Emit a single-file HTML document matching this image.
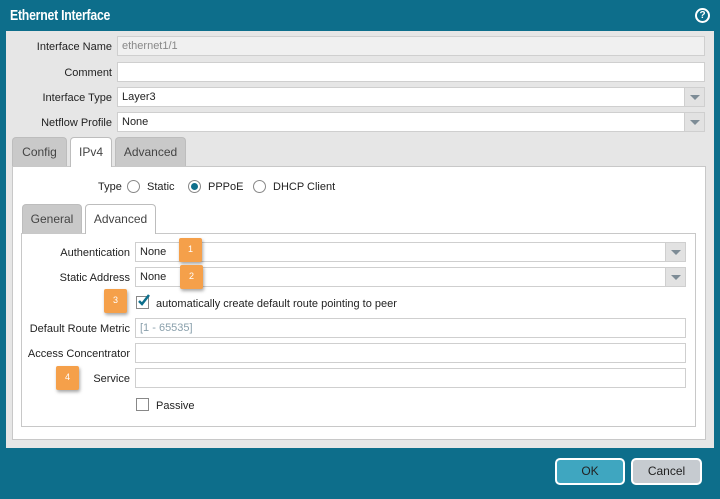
<!DOCTYPE html>
<html><head><style>
*{box-sizing:border-box;margin:0;padding:0}
body{width:720px;height:499px;background:#0d6e8b;font-family:"Liberation Sans",sans-serif;font-size:11px;color:#222;position:relative;overflow:hidden}
.a{position:absolute}
.title{left:10px;top:7px;color:#fff;font-size:15px;font-weight:bold;transform:scaleX(0.82);transform-origin:0 0;letter-spacing:-0.3px}
.help{left:695px;top:8px;width:15px;height:15px;border:2px solid #fff;border-radius:50%;color:#fff;font-size:10px;font-weight:bold;text-align:center;line-height:11px}
.panel{left:6px;top:31px;width:708px;height:417px;background:#e6e6e6}
.lbl{text-align:right;font-size:11px}
.inp{background:#fff;border:1px solid #cfcfcf;height:20px;padding-left:4px;line-height:19px;font-size:11px}
.arr{position:absolute;right:0;top:0;width:20px;height:18px;background:#e2e2e2;border-left:1px solid #cfcfcf}
.arr:after{content:"";position:absolute;left:5px;top:7px;border-left:5px solid transparent;border-right:5px solid transparent;border-top:5px solid #7d8c96}
.tab{background:#c9c9c9;border:1px solid #bdbdbd;border-bottom:none;border-radius:4px 4px 0 0;text-align:center;font-size:12px;color:#444;line-height:29px}
.tab.on{background:#fff}
.box{background:#fff;border:1px solid #c8c8c8}
.badge{width:23px;height:24px;background:#f5a04a;color:#fff;font-size:9px;text-align:center;line-height:22px;box-shadow:1px 2px 3px rgba(0,0,0,.35);border-radius:2px}
.radio{width:13px;height:13px;border:1px solid #888;border-radius:50%;background:#fff}
.btn{border:2px solid #fff;border-radius:5px;text-align:center;line-height:22px;font-size:12px;color:#222}
</style></head><body>
<div class="a title">Ethernet Interface</div>
<div class="a help">?</div>
<div class="a panel"></div>

<div class="a lbl" style="left:10px;top:41px;width:102px">Interface Name</div>
<div class="a inp" style="left:117px;top:36px;width:588px;background:#f0f0f0;color:#888">ethernet1/1</div>
<div class="a lbl" style="left:10px;top:67px;width:102px">Comment</div>
<div class="a inp" style="left:117px;top:62px;width:588px"></div>
<div class="a lbl" style="left:10px;top:92px;width:102px">Interface Type</div>
<div class="a inp" style="left:117px;top:87px;width:588px">Layer3<div class="arr"></div></div>
<div class="a lbl" style="left:10px;top:117px;width:102px">Netflow Profile</div>
<div class="a inp" style="left:117px;top:112px;width:588px">None<div class="arr"></div></div>

<div class="a tab" style="left:12px;top:137px;width:55px;height:29px">Config</div>
<div class="a box" style="left:12px;top:166px;width:694px;height:274px"></div>
<div class="a tab on" style="left:70px;top:137px;width:42px;height:30px">IPv4</div>
<div class="a tab" style="left:115px;top:137px;width:71px;height:29px">Advanced</div>

<div class="a" style="left:98px;top:181px">Type</div>
<div class="a radio" style="left:127px;top:180px"></div>
<div class="a" style="left:147px;top:181px">Static</div>
<div class="a radio" style="left:188px;top:180px;border-color:#888"><div style="width:7px;height:7px;border-radius:50%;background:#0d6e8b;margin:2px"></div></div>
<div class="a" style="left:208px;top:181px">PPPoE</div>
<div class="a radio" style="left:253px;top:180px"></div>
<div class="a" style="left:273px;top:181px">DHCP Client</div>

<div class="a tab" style="left:22px;top:204px;width:60px;height:29px">General</div>
<div class="a box" style="left:21px;top:233px;width:675px;height:194px"></div>
<div class="a tab on" style="left:85px;top:204px;width:71px;height:30px">Advanced</div>

<div class="a lbl" style="left:25px;top:247px;width:105px">Authentication</div>
<div class="a inp" style="left:135px;top:242px;width:551px">None<div class="arr"></div></div>
<div class="a lbl" style="left:25px;top:272px;width:105px">Static Address</div>
<div class="a inp" style="left:135px;top:267px;width:551px">None<div class="arr"></div></div>
<div class="a" style="left:136px;top:296px;width:13px;height:13px;border:1px solid #888;background:#fff"><svg width="13" height="13" style="position:absolute;left:0;top:-3px"><path d="M2 7 L5 10 L12 1" stroke="#0d6e8b" stroke-width="2.5" fill="none"/></svg></div>
<div class="a" style="left:156px;top:298px">automatically create default route pointing to peer</div>
<div class="a lbl" style="left:25px;top:323px;width:105px">Default Route Metric</div>
<div class="a inp" style="left:135px;top:318px;width:551px;color:#8aa0ac">[1 - 65535]</div>
<div class="a lbl" style="left:25px;top:348px;width:105px">Access Concentrator</div>
<div class="a inp" style="left:135px;top:343px;width:551px"></div>
<div class="a lbl" style="left:25px;top:373px;width:105px">Service</div>
<div class="a inp" style="left:135px;top:368px;width:551px"></div>
<div class="a" style="left:136px;top:398px;width:13px;height:13px;border:1px solid #888;background:#fff"></div>
<div class="a" style="left:156px;top:400px">Passive</div>

<div class="a badge" style="left:179px;top:238px">1</div>
<div class="a badge" style="left:180px;top:265px">2</div>
<div class="a badge" style="left:104px;top:289px">3</div>
<div class="a badge" style="left:56px;top:366px">4</div>

<div class="a btn" style="left:555px;top:458px;width:70px;height:27px;background:#3fa6c0">OK</div>
<div class="a btn" style="left:631px;top:458px;width:71px;height:27px;background:#c6cbd0">Cancel</div>
</body></html>
